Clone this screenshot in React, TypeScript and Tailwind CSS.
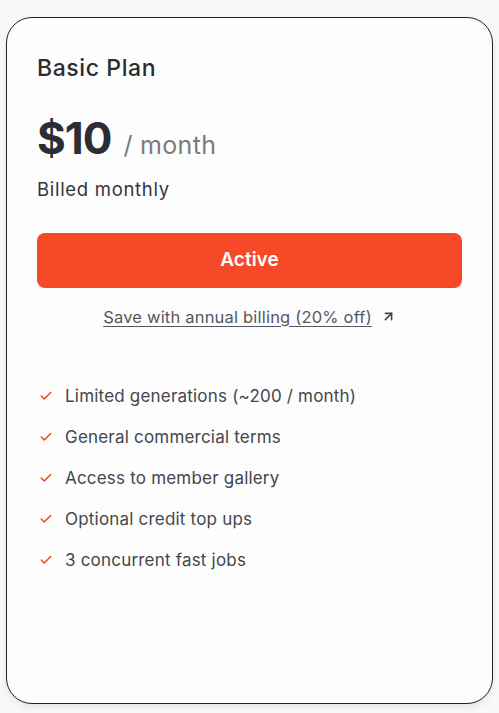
import { Check, ArrowUpRight } from "lucide-react";

const features = [
  "Limited generations (~200 / month)",
  "General commercial terms",
  "Access to member gallery",
  "Optional credit top ups",
  "3 concurrent fast jobs",
];

export default function App() {
  return (
    <div
      className="min-h-[713px] bg-[#f8f8f8] pt-[17px] pl-[6px]"
      style={{ fontFamily: "Inter, 'Noto Sans', sans-serif" }}
    >
      <div className="w-[487px] h-[687px] rounded-[26px] border border-[#222] bg-[#fdfdfd] shadow-[0_3px_6px_rgba(0,0,0,0.08)] px-[30px] pt-[36px]">
        <h2 className="text-[23px] tracking-[0.6px] font-medium text-[#2b2d33] leading-[28px]">
          Basic Plan
        </h2>

        <div className="mt-[30px] flex items-baseline gap-[12px]">
          <span className="text-[44px] font-bold tracking-[-1px] text-[#2b2d33] leading-[52px]">
            $10
          </span>
          <span className="text-[25px] tracking-[0.3px] text-[#7b7b7b]">/ month</span>
        </div>
        <p className="mt-[11px] text-[18.5px] tracking-[0.7px] text-[#33353b] leading-[26px]">
          Billed monthly
        </p>

        <button className="mt-[31px] w-full h-[55px] rounded-[8px] bg-[#f54927] text-white text-[19px] font-semibold">
          Active
        </button>

        <div className="mt-[17px] flex items-center justify-center gap-[9px] text-[16.5px] tracking-[0.2px] text-[#55575e]">
          <span className="underline underline-offset-[3px]">
            Save with annual billing (20% off)
          </span>
          <ArrowUpRight size={15} strokeWidth={2.5} className="text-[#444]" />
        </div>

        <ul className="mt-[55px] flex flex-col gap-[17px] pl-[2px]">
          {features.map((f) => (
            <li key={f} className="flex items-center gap-[12px] text-[17px] tracking-[0.2px] text-[#44464c] leading-[24px]">
              <Check size={14} strokeWidth={2.5} className="text-[#f0421e]" />
              {f}
            </li>
          ))}
        </ul>
      </div>
    </div>
  );
}
